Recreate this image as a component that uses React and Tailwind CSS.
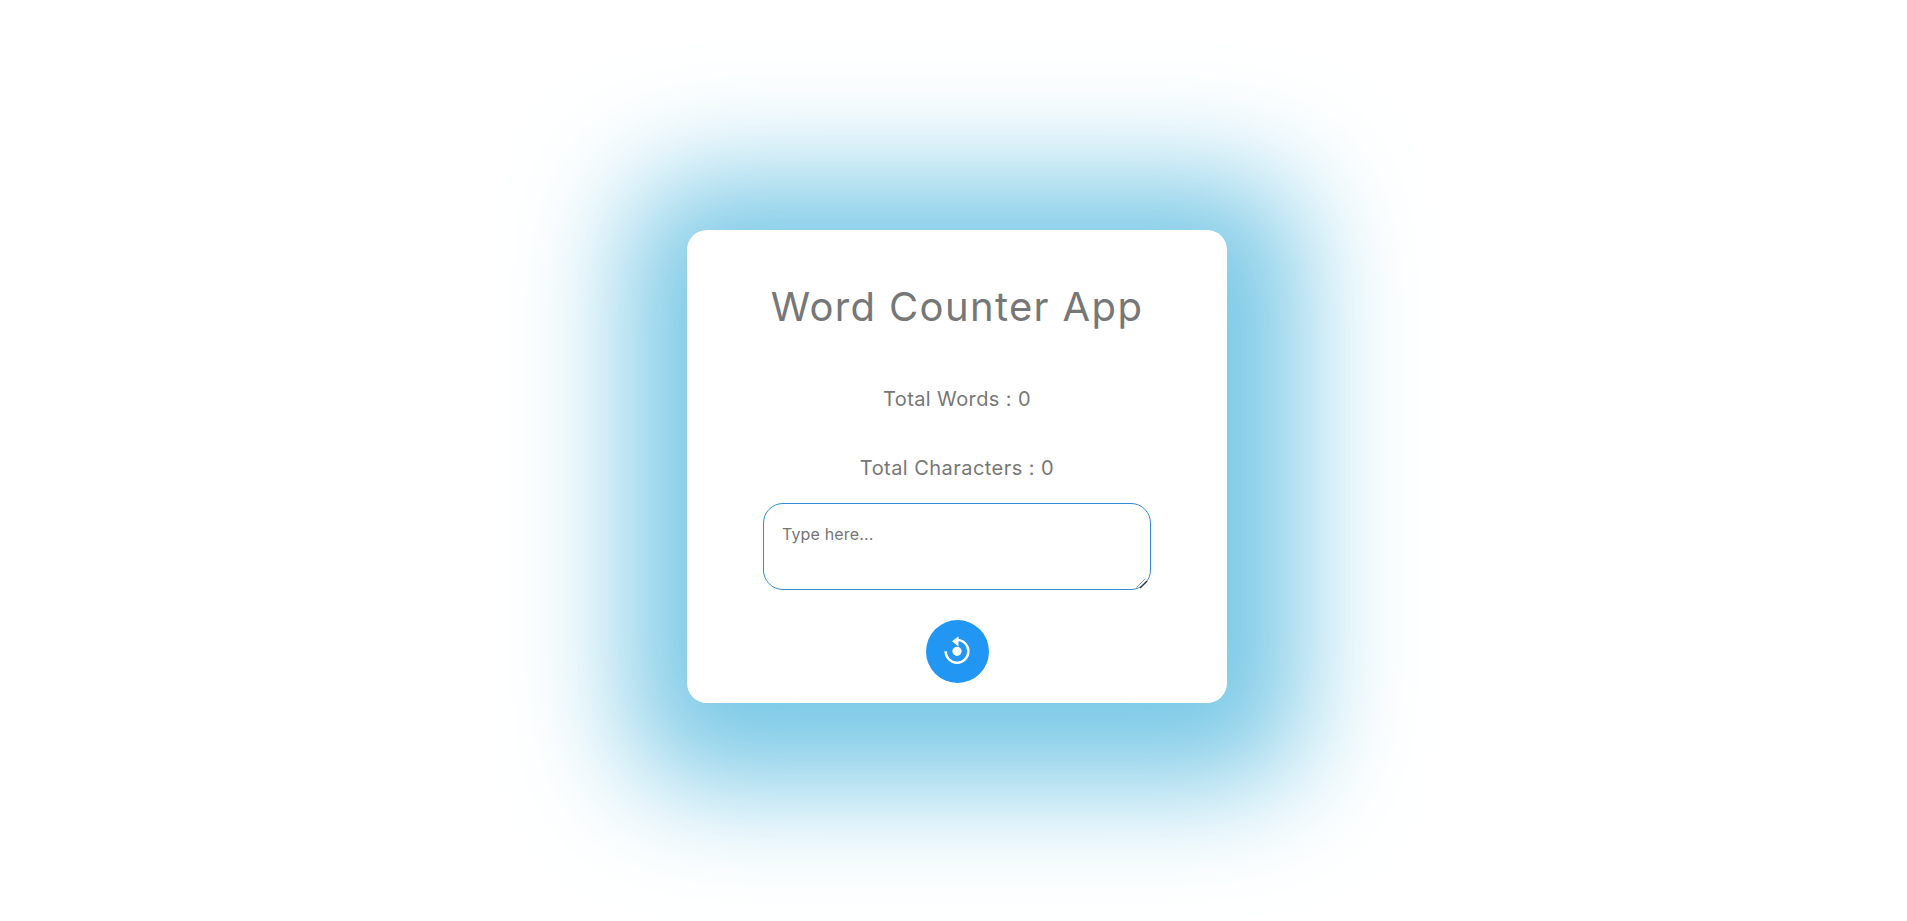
export default function App() {
  return (
    <div className="h-screen overflow-hidden bg-white flex justify-center pl-[7px] font-['Inter','Liberation_Sans',sans-serif]">
      <div className="w-[540px] h-[473px] mt-[230px] bg-white rounded-[20px] shadow-[8px_15px_115px_66px_#78c8e6] flex flex-col items-center pt-[47px] pb-[20px]">
        <h1 className="text-[40px] leading-[60px] font-normal tracking-[1.35px] text-[#777]">Word Counter App</h1>
        <p className="mt-[47px] text-[20px] leading-[30px] tracking-[0.4px] text-[#777]">Total Words : 0</p>
        <p className="mt-[39px] text-[20px] leading-[30px] tracking-[0.45px] text-[#777]">Total Characters : 0</p>
        <div className="relative mt-[20px] w-[388px] h-[87px]">
          <textarea
            placeholder="Type here..."
            className="block w-full h-full resize-none rounded-[20px] border border-[#2f8fd8] px-[18px] pt-[18px] pb-[14px] text-[16px] leading-[24px] tracking-[0.15px] outline-none placeholder:text-[#757575]"
          />
          <svg className="absolute left-[373px] top-[75px] pointer-events-none" width="12" height="11" viewBox="0 0 12 11" fill="none">
            <path d="M0.5 9.5 9.5 0.5" stroke="#8a8f93" strokeWidth="1" />
            <path d="M4 10 11 3" stroke="#2f3336" strokeWidth="1.2" />
          </svg>
        </div>
        <button className="mt-[30px] w-[63px] h-[63px] rounded-full bg-[#2196f3] flex items-center justify-center">
          <svg width="32" height="32" viewBox="0 0 32 32" fill="none">
            <path d="M16 3.9A11.4 11.4 0 1 1 4.6 15.3" stroke="#fff" strokeWidth="2.4" />
            <path d="M17.5 0.3 11 5.3l6.5 5.2z" fill="#fff" />
            <circle cx="16" cy="15.3" r="4.6" fill="#fff" />
          </svg>
        </button>
      </div>
    </div>
  );
}
